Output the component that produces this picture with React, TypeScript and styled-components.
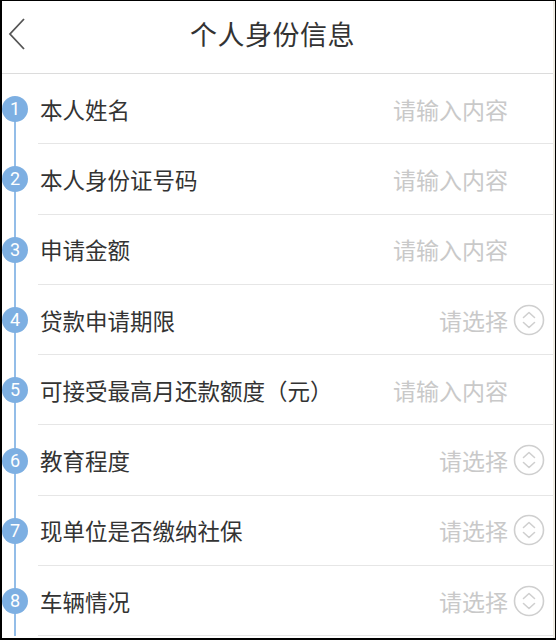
import React from "react";
import styled, { createGlobalStyle } from "styled-components";

const Global = createGlobalStyle`
  html, body { margin: 0; padding: 0; background: #fff; }
  body { font-family: "Noto Sans CJK SC", "Noto Sans", sans-serif; }
`;

const Frame = styled.div`
  width: 556px;
  height: 640px;
  box-sizing: border-box;
  border-top: 1px solid #000;
  border-left: 2px solid #000;
  border-right: 1px solid #000;
  border-bottom: 2px solid #000;
  overflow: hidden;
  background: #fff;
  display: flex;
  flex-direction: column;
`;

const Inner = styled.div`
  flex: 1;
  display: flex;
  flex-direction: column;
  border-right: 2px solid #efece3;
  overflow: hidden;
`;

const Header = styled.header`
  height: 72px;
  flex: none;
  display: grid;
  grid-template-columns: 60px 1fr 70px;
  align-items: center;
  border-bottom: 1px solid #dcdcdc;
`;

const Back = styled.button`
  background: none;
  border: none;
  padding: 0 0 6px 5px;
  height: 40px;
  display: flex;
  align-items: center;
`;

const Title = styled.h1`
  margin: 0;
  text-align: center;
  font-size: 27px;
  font-weight: 400;
  color: #333;
  letter-spacing: 0.5px;
  padding-bottom: 8px;
`;

const List = styled.div`
  display: flex;
  flex-direction: column;
`;

const Row = styled.div`
  display: flex;
  height: 70.3px;
  flex: none;
`;

const Gutter = styled.div<{ $first: boolean }>`
  width: 36px;
  flex: none;
  position: relative;
  display: flex;
  align-items: center;
  &::before {
    content: "";
    position: absolute;
    left: 12px;
    width: 2px;
    background: #93bde8;
    top: ${(p) => (p.$first ? "50%" : "0")};
    bottom: 0;
  }
`;

const Badge = styled.span`
  position: relative;
  z-index: 1;
  width: 26px;
  height: 26px;
  border-radius: 50%;
  background: #7dafe2;
  color: #fff;
  font-family: "Roboto", "Noto Sans", sans-serif;
  font-size: 18px;
  display: flex;
  align-items: center;
  justify-content: center;
  line-height: 1;
`;

const Content = styled.div`
  flex: 1;
  display: flex;
  align-items: center;
  justify-content: space-between;
  border-bottom: 1px solid #e6e6e6;
  padding: 0 8px 0 2px;
`;

const Label = styled.span`
  font-size: 22.5px;
  color: #333;
`;

const Value = styled.span<{ $select: boolean }>`
  display: flex;
  align-items: center;
  gap: 5px;
  font-size: 23px;
  color: #c9c9c9;
  margin-right: ${(p) => (p.$select ? "0" : "37px")};
`;

const SelectIcon = () => (
  <svg width="32" height="32" viewBox="0 0 32 32" fill="none">
    <circle cx="16" cy="16" r="14.5" stroke="#cfcfcf" strokeWidth="1.6" />
    <path d="M10.5 13.5 L16 8.5 L21.5 13.5" stroke="#cfcfcf" strokeWidth="1.6" strokeLinecap="round" strokeLinejoin="round" />
    <path d="M10.5 18.5 L16 23.5 L21.5 18.5" stroke="#cfcfcf" strokeWidth="1.6" strokeLinecap="round" strokeLinejoin="round" />
  </svg>
);

const items: { label: string; select: boolean }[] = [
  { label: "本人姓名", select: false },
  { label: "本人身份证号码", select: false },
  { label: "申请金额", select: false },
  { label: "贷款申请期限", select: true },
  { label: "可接受最高月还款额度（元）", select: false },
  { label: "教育程度", select: true },
  { label: "现单位是否缴纳社保", select: true },
  { label: "车辆情况", select: true },
];

export default function App() {
  return (
    <>
      <Global />
      <Frame>
        <Inner>
          <Header>
            <Back aria-label="back">
              <svg width="20" height="34" viewBox="0 0 20 34" fill="none">
                <path d="M17 2 L3 17 L17 32" stroke="#555" strokeWidth="1.8" />
              </svg>
            </Back>
            <Title>个人身份信息</Title>
            <span />
          </Header>
          <List>
            {items.map((it, i) => (
              <Row key={it.label}>
                <Gutter $first={i === 0}>
                  <Badge>{i + 1}</Badge>
                </Gutter>
                <Content>
                  <Label>{it.label}</Label>
                  <Value $select={it.select}>
                    {it.select ? "请选择" : "请输入内容"}
                    {it.select && <SelectIcon />}
                  </Value>
                </Content>
              </Row>
            ))}
          </List>
        </Inner>
      </Frame>
    </>
  );
}
